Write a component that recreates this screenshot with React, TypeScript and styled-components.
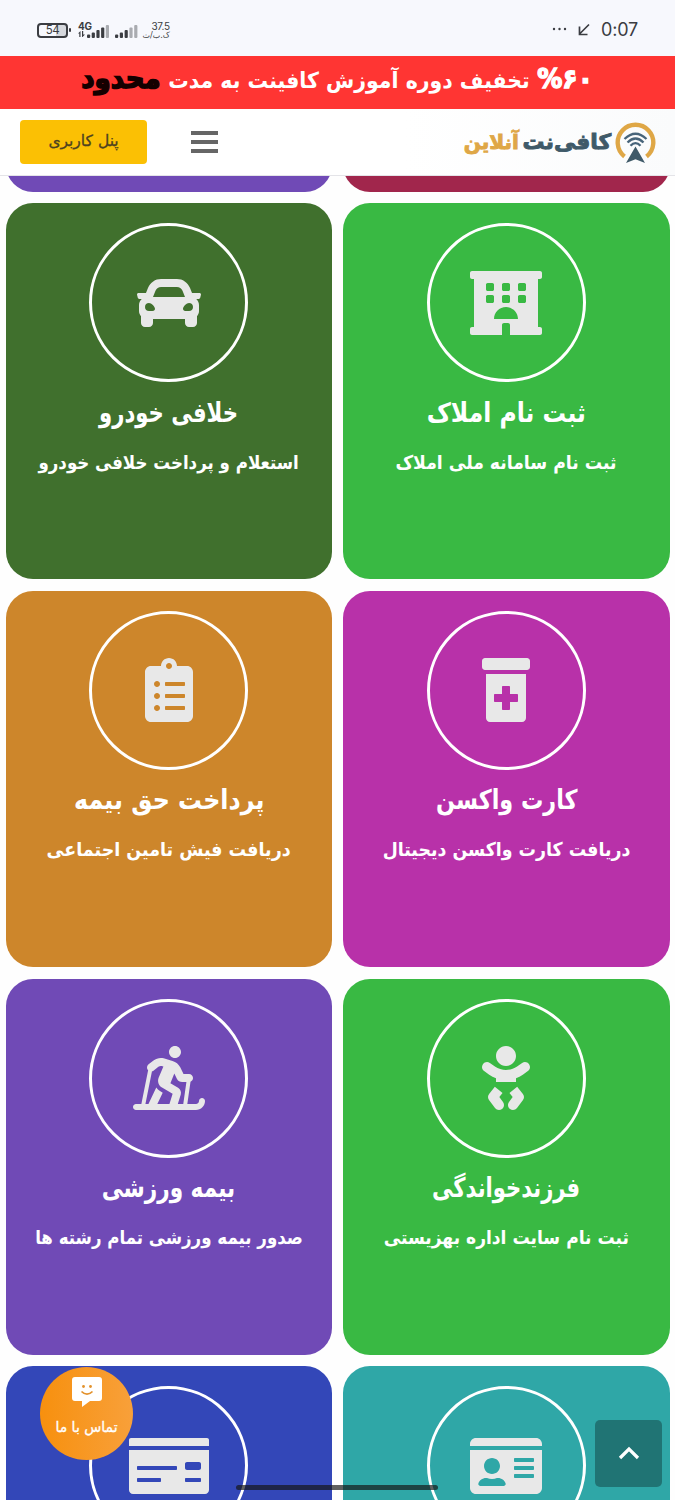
import type { ComponentType } from "react";
import styled, { createGlobalStyle } from "styled-components";
import {
  FaBaby,
  FaCar,
  FaClipboardList,
  FaHotel,
  FaIdCard,
  FaMoneyCheck,
  FaPrescriptionBottleAlt,
  FaSkiingNordic,
} from "react-icons/fa";

interface Service {
  color: string;
  icon?: ComponentType;
  iconWidth?: number;
  title?: string;
  titleScale?: number;
  text?: string;
  textScale?: number;
}

const GlobalStyle = createGlobalStyle`
  * {
    box-sizing: border-box;
  }

  body {
    margin: 0;
    background: #fff;
    font-family: "DejaVu Sans", sans-serif;
  }
`;

const Screen = styled.div`
  position: relative;
  display: flex;
  flex-direction: column;
  width: 675px;
  height: 1500px;
  overflow: hidden;
  background: #fefefe;
`;

const StatusBar = styled.div`
  display: flex;
  flex: 0 0 56px;
  align-items: center;
  justify-content: space-between;
  padding: 4px 37px 0 37px;
  background: #f7f8fd;
  color: #3b3d42;
`;

const StatusGroup = styled.div`
  display: flex;
  align-items: center;
`;

const Battery = styled.div`
  position: relative;
  width: 31px;
  height: 15px;
  border: 2px solid #3b3d42;
  border-radius: 4px;
  background: linear-gradient(90deg, #f7f8fd 62%, #d6d8dd 62%);
  font: 400 11.5px/11.5px Inter, sans-serif;
  letter-spacing: -0.5px;
  text-align: center;

  &::after {
    position: absolute;
    top: 3.5px;
    right: -5px;
    width: 2px;
    height: 4px;
    border-radius: 1px;
    background: #3b3d42;
    content: "";
  }
`;

const Network = styled.div`
  display: flex;
  flex-direction: column;
  width: 14px;
  height: 18px;
  margin-left: 10px;
  font: 700 10px/10px Inter, sans-serif;
  letter-spacing: -0.3px;
`;

const Signals = styled.svg`
  margin-left: -5px;
`;

const Speed = styled.div`
  display: flex;
  flex-direction: column;
  align-items: flex-end;
  width: 28px;
  margin-left: 3px;
  font: 400 10px/10px Inter, sans-serif;
  letter-spacing: -0.2px;
`;

const SpeedUnit = styled.span`
  font: 400 8px/9px "DejaVu Sans", sans-serif;
  letter-spacing: 0;
  white-space: nowrap;
`;

const Clock = styled.span`
  margin-left: 11px;
  font: 400 18px/22px Inter, sans-serif;
  letter-spacing: -0.2px;
`;

const Banner = styled.div`
  display: flex;
  flex: 0 0 53px;
  align-items: center;
  justify-content: center;
  background: #ff3533;
  color: #fff;
  direction: rtl;
`;

const BannerText = styled.p`
  display: flex;
  align-items: baseline;
  gap: 8px;
  margin: 0;
  padding-bottom: 7px;
  font-size: 22px;
  font-weight: 700;
  line-height: 1;
  white-space: nowrap;
  transform: scaleX(0.93);

  mark {
    background: none;
    color: #140000;
    font-size: 28px;
    -webkit-text-stroke: 1.6px #140000;
  }

  strong {
    font-size: 27px;
    -webkit-text-stroke: 1.4px #fff;
  }
`;

const Header = styled.header`
  z-index: 1;
  display: flex;
  flex: 0 0 67px;
  align-items: center;
  padding: 0 19px 0 20px;
  border-bottom: 1px solid #e4e4e8;
  background: linear-gradient(90deg, #fff 60%, #fafbfc);
`;

const PanelButton = styled.button`
  display: flex;
  width: 127px;
  height: 44px;
  align-items: center;
  justify-content: center;
  padding: 0 0 3px;
  border: 0;
  border-radius: 4px;
  background: #fbc004;
  color: #4d4220;
  font: 400 15.5px "DejaVu Sans", sans-serif;
  -webkit-text-stroke: 0.3px #4d4220;
`;

const MenuButton = styled.button`
  display: flex;
  width: 27px;
  flex-direction: column;
  gap: 5px;
  margin: 0 auto 0 44px;
  padding: 0;
  border: 0;
  background: none;

  span {
    height: 4px;
    background: #666;
  }
`;

const Brand = styled.div`
  display: flex;
  align-items: center;
  gap: 4px;
  direction: rtl;
`;

const BrandName = styled.span`
  display: flex;
  font-size: 21px;
  font-weight: 700;
  line-height: 1;
  white-space: nowrap;
`;

const BrandFirst = styled.span`
  color: #3f5a69;
  -webkit-text-stroke: 0.9px #3f5a69;
  transform: scaleX(1.04);
  transform-origin: right;
`;

const BrandSecond = styled.span`
  margin-right: 7px;
  color: #dfa746;
  font-size: 20px;
  -webkit-text-stroke: 0.9px #dfa746;
`;

const Viewport = styled.main`
  flex: 1;
  min-height: 0;
  overflow: hidden;
`;

const Services = styled.div`
  display: grid;
  grid-template-columns: repeat(2, 326.5px);
  grid-auto-rows: 376px;
  gap: 11.7px 11px;
  margin-top: -360.5px;
  padding: 0 5.5px;
  direction: rtl;
`;

const Card = styled.article<{ $color: string }>`
  display: flex;
  flex-direction: column;
  align-items: center;
  padding-top: 20px;
  border-radius: 27px;
  background: ${({ $color }) => $color};
  color: #fff;
`;

const IconRing = styled.div<{ $iconWidth: number }>`
  display: flex;
  width: 159px;
  height: 159px;
  flex: 0 0 auto;
  align-items: center;
  justify-content: center;
  border: 3px solid #fff;
  border-radius: 50%;
  color: #e8e8e8;

  svg {
    width: ${({ $iconWidth }) => $iconWidth}px;
    height: 64px;
  }
`;

const CardTitle = styled.h2<{ $scale: number }>`
  margin: 12.5px 0 0;
  font-size: 27px;
  font-weight: 700;
  line-height: 36px;
  white-space: nowrap;
  transform: scaleX(${({ $scale }) => $scale});
`;

const CardText = styled.p<{ $scale: number }>`
  margin: 15px 0 0;
  font-size: 19px;
  font-weight: 700;
  line-height: 32px;
  white-space: nowrap;
  transform: scaleX(${({ $scale }) => $scale});
`;

const ContactBubble = styled.button`
  position: absolute;
  top: 1367px;
  left: 40px;
  z-index: 2;
  display: flex;
  width: 93px;
  height: 93px;
  flex-direction: column;
  align-items: center;
  gap: 10px;
  padding: 10px 0 0;
  border: 0;
  border-radius: 50%;
  background: linear-gradient(90deg, #f7900e, #f8a03a);
  color: #fff;
  font: 400 14px/20px "DejaVu Sans", sans-serif;
  -webkit-text-stroke: 0.3px #fff;
`;

const ScrollTop = styled.button`
  position: absolute;
  top: 1420px;
  left: 595px;
  z-index: 2;
  display: flex;
  width: 67px;
  height: 67px;
  align-items: center;
  justify-content: center;
  padding: 0 0 2px;
  border: 0;
  border-radius: 5px;
  background: rgba(0, 0, 0, 0.3);
`;

const HomeIndicator = styled.div`
  position: absolute;
  top: 1485px;
  left: 236px;
  z-index: 3;
  width: 202px;
  height: 5px;
  border-radius: 3px;
  background: rgba(20, 20, 20, 0.68);
`;

const services: Service[] = [
  { color: "#a1264c" },
  { color: "#704ab6" },
  {
    color: "#39b943",
    icon: FaHotel,
    iconWidth: 72,
    title: "ثبت نام املاک",
    titleScale: 0.871,
    text: "ثبت نام سامانه ملی املاک",
    textScale: 0.906,
  },
  {
    color: "#40702d",
    icon: FaCar,
    title: "خلافی خودرو",
    titleScale: 0.785,
    text: "استعلام و پرداخت خلافی خودرو",
    textScale: 0.876,
  },
  {
    color: "#b831a9",
    icon: FaPrescriptionBottleAlt,
    title: "کارت واکسن",
    titleScale: 0.826,
    text: "دریافت کارت واکسن دیجیتال",
    textScale: 0.914,
  },
  {
    color: "#cd862b",
    icon: FaClipboardList,
    title: "پرداخت حق بیمه",
    titleScale: 0.88,
    text: "دریافت فیش تامین اجتماعی",
    textScale: 0.92,
  },
  {
    color: "#39b943",
    icon: FaBaby,
    title: "فرزندخواندگی",
    titleScale: 0.779,
    text: "ثبت نام سایت اداره بهزیستی",
    textScale: 0.9,
  },
  {
    color: "#704ab6",
    icon: FaSkiingNordic,
    iconWidth: 72,
    title: "بیمه ورزشی",
    titleScale: 0.8,
    text: "صدور بیمه ورزشی تمام رشته ها",
    textScale: 0.875,
  },
  { color: "#2fa7a7", icon: FaIdCard, iconWidth: 72 },
  { color: "#3347b8", icon: FaMoneyCheck, iconWidth: 80 },
];

function SignalBars() {
  return (
    <Signals width="52" height="18" viewBox="0 0 52 18" fill="#3b3d42">
      <rect x="0" y="13.500" width="3.200" height="3.500" rx="1" />
      <rect x="4.700" y="11.500" width="3.200" height="5.500" rx="1" />
      <rect x="9.400" y="9" width="3.200" height="8" rx="1" />
      <rect x="14.100" y="6.500" width="3.200" height="10.500" rx="1" />
      <rect x="18.800" y="4" width="3.200" height="13" rx="1" fill="#a9abb0" />
      <rect x="28" y="13.500" width="3.200" height="3.500" rx="1" />
      <rect x="32.800" y="11.500" width="3.200" height="5.500" rx="1" />
      <rect x="37.600" y="9" width="3.200" height="8" rx="1" />
      <rect x="42.400" y="6.500" width="3.200" height="10.500" rx="1" fill="#a9abb0" />
      <rect x="47.200" y="4" width="3.200" height="13" rx="1" fill="#a9abb0" />
    </Signals>
  );
}

function BrandMark() {
  return (
    <svg width="41" height="41" viewBox="0 0 41 41" fill="none">
      <path
        d="M9.500 34.500A17.800 17.800 0 1 1 31.500 34.500"
        stroke="#dfa746"
        strokeWidth="4.400"
      />
      <g stroke="#47647a" strokeWidth="2.300">
        <path d="M9.500 17Q20.500 6.500 31.500 17" />
        <path d="M12.500 20.500Q20.500 12.500 28.500 20.500" />
        <path d="M15.500 23.700Q20.500 18.500 25.500 23.700" />
      </g>
      <path d="M20.500 24.500 30 41 20.500 37.300 11 41Z" fill="#3f5a69" />
    </svg>
  );
}

export default function App() {
  return (
    <Screen>
      <GlobalStyle />

      <StatusBar>
        <StatusGroup>
          <Battery>54</Battery>
          <Network>
            4G
            <svg width="8" height="6" viewBox="0 0 8 6" fill="#3b3d42">
              <path d="M0 2.500 2.500 0V6H1.300V2.500ZM4 0H5.200V3.500H7L4.500 6H4Z" />
            </svg>
          </Network>
          <SignalBars />
          <Speed>
            37.5
            <SpeedUnit dir="rtl">ک.ب/ث</SpeedUnit>
          </Speed>
        </StatusGroup>
        <StatusGroup>
          <svg width="38" height="14" viewBox="0 0 38 14" fill="#3b3d42">
            <circle cx="2" cy="6" r="1.200" />
            <circle cx="7.500" cy="6" r="1.200" />
            <circle cx="13" cy="6" r="1.200" />
            <path
              d="M37 1.500 27.500 11M27.500 3.500V11.500H35.500"
              fill="none"
              stroke="#3b3d42"
              strokeWidth="1.700"
            />
          </svg>
          <Clock>0:07</Clock>
        </StatusGroup>
      </StatusBar>

      <Banner>
        <BannerText>
          <strong>{"۶۰\u200f%"}</strong>
          <span>تخفیف دوره آموزش کافینت به مدت</span>
          <mark>محدود</mark>
        </BannerText>
      </Banner>

      <Header>
        <PanelButton type="button" dir="rtl">
          پنل کاربری
        </PanelButton>
        <MenuButton type="button" aria-label="منو">
          <span />
          <span />
          <span />
        </MenuButton>
        <Brand>
          <BrandMark />
          <BrandName>
            <BrandFirst>کافی‌نت</BrandFirst>
            <BrandSecond>آنلاین</BrandSecond>
          </BrandName>
        </Brand>
      </Header>

      <Viewport>
        <Services>
          {services.map((service, index) => {
            const { icon: Icon, title, text } = service;

            return (
              <Card key={index} $color={service.color}>
                {Icon && (
                  <IconRing $iconWidth={service.iconWidth ?? 64}>
                    <Icon />
                  </IconRing>
                )}
                {title && (
                  <CardTitle $scale={service.titleScale ?? 1}>{title}</CardTitle>
                )}
                {text && (
                  <CardText $scale={service.textScale ?? 1}>{text}</CardText>
                )}
              </Card>
            );
          })}
        </Services>
      </Viewport>

      <ContactBubble type="button" dir="rtl">
        <svg width="30" height="30" viewBox="0 0 30 30" fill="none">
          <path
            d="M3 0H27Q30 0 30 3V21Q30 24 27 24H18L10 30V24H3Q0 24 0 21V3Q0 0 3 0Z"
            fill="#fff"
          />
          <circle cx="11.500" cy="9.500" r="1.400" fill="#e3922d" />
          <circle cx="18.500" cy="9.500" r="1.400" fill="#e3922d" />
          <path
            d="M9.500 14.500Q15 20 20.500 14.500"
            stroke="#e3922d"
            strokeWidth="1.700"
          />
        </svg>
        تماس با ما
      </ContactBubble>

      <ScrollTop type="button" aria-label="بازگشت به بالا">
        <svg width="22" height="14" viewBox="0 0 22 14" fill="none">
          <path d="M2 12 11 3 20 12" stroke="#fff" strokeWidth="3.200" />
        </svg>
      </ScrollTop>

      <HomeIndicator />
    </Screen>
  );
}
